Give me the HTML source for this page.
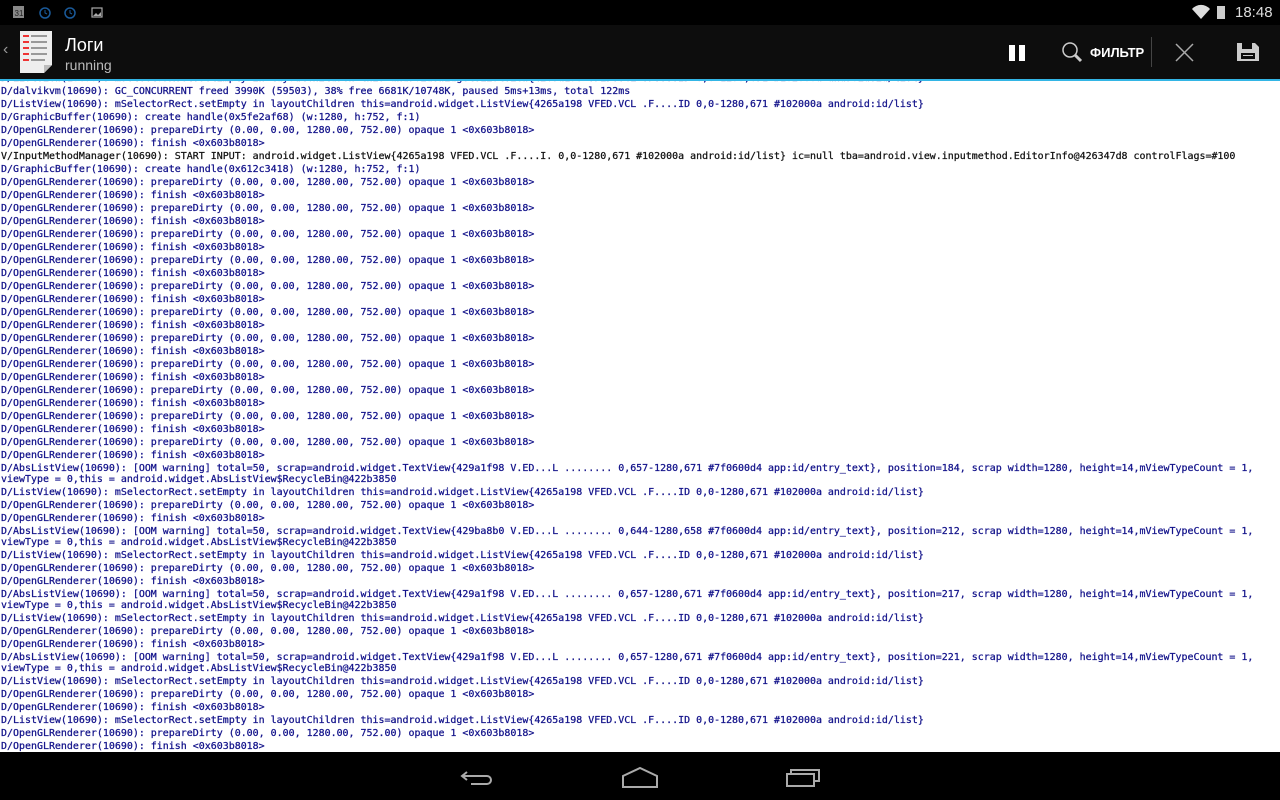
<!DOCTYPE html>
<html><head><meta charset="utf-8"><style>
*{margin:0;padding:0;box-sizing:border-box}
body{width:1280px;height:800px;overflow:hidden;background:#000;position:relative;font-family:"Liberation Sans","Noto Sans CJK SC",sans-serif}
#sb{position:absolute;left:0;top:0;width:1280px;height:25px;background:#000}
#ab{position:absolute;left:0;top:25px;width:1280px;height:54px;background:#0d0d0d}
#line{position:absolute;left:0;top:79px;width:1280px;height:2px;background:#33b5e5}
#log{position:absolute;left:0;top:81px;width:1280px;height:671px;background:#fff;overflow:hidden}
#inner{position:absolute;left:1px;top:-9px;font-family:"DejaVu Sans Mono",monospace;font-size:9.96px;line-height:11px;color:#12128a;-webkit-text-stroke:0.25px #12128a}
#inner div{padding:1px 0;white-space:nowrap;height:13px}
#inner div.w{height:24px}
#inner .v{color:#111;-webkit-text-stroke:0.25px #111}
#nb{position:absolute;left:0;top:752px;width:1280px;height:48px;background:#000}
.t{position:absolute;color:#fff}
</style></head><body>
<div id="sb">
<svg width="110" height="25" style="position:absolute;left:0;top:0">
<rect x="13" y="6" width="11" height="12" fill="#888"/><text x="14.5" y="16" font-size="8" fill="#222" font-family="Liberation Sans">31</text>
<circle cx="45" cy="13" r="5" fill="none" stroke="#1a5a9a" stroke-width="1.5"/><path d="M45 10v3l2 1" stroke="#1a5a9a" fill="none"/>
<circle cx="70" cy="13" r="5" fill="none" stroke="#1a5a9a" stroke-width="1.5"/><path d="M70 10v3l2 1" stroke="#1a5a9a" fill="none"/>
<rect x="92" y="8" width="10" height="9" fill="none" stroke="#aaa" stroke-width="1.2"/><path d="M93 16l3-3 2 2 3-3v4z" fill="#aaa"/>
</svg>
<svg width="40" height="25" style="position:absolute;left:1190px;top:0"><path d="M2 9a12 12 0 0 1 18 0l-9 10z" fill="#ddd"/><rect x="27" y="6" width="8" height="13" fill="#ccc"/></svg>
<div class="t" style="left:1235px;top:4px;font-size:15px;color:#ddd">18:48</div>
</div>
<div id="ab">
<div class="t" style="left:3px;top:16px;font-size:16px;color:#999">‹</div>
<svg width="38" height="46" style="position:absolute;left:18px;top:4px"><path d="M2 2h32v34l-8 8H2z" fill="#eee"/><path d="M26 44l8-8h-8z" fill="#bbb"/>
<g fill="#e33"><rect x="5" y="6" width="6" height="2"/><rect x="5" y="12" width="6" height="2"/><rect x="5" y="18" width="6" height="2"/><rect x="5" y="24" width="6" height="2"/><rect x="5" y="30" width="6" height="2"/></g>
<g fill="#999"><rect x="13" y="6" width="16" height="2"/><rect x="13" y="12" width="16" height="2"/><rect x="13" y="18" width="16" height="2"/><rect x="13" y="24" width="16" height="2"/><rect x="13" y="30" width="14" height="2"/></g></svg>
<div class="t" style="left:65px;top:10px;font-size:18px">Логи</div>
<div class="t" style="left:65px;top:32px;font-size:14px;color:#bbb">running</div>
<svg width="280" height="54" style="position:absolute;left:1000px;top:0">
<rect x="9" y="20" width="6" height="16" fill="#fff"/><rect x="19" y="20" width="6" height="16" fill="#fff"/>
<circle cx="70" cy="25" r="7" fill="none" stroke="#ccc" stroke-width="1.5"/><path d="M75 30l6 6" stroke="#ccc" stroke-width="3"/>
<rect x="151" y="12" width="1" height="30" fill="#444"/>
<path d="M176 19l17 17M193 19l-17 17" stroke="#aaa" stroke-width="1.5"/>
<path d="M237 18h18l4 4v14h-22z" fill="#ccc"/><rect x="242" y="18" width="10" height="6" fill="#0d0d0d"/><rect x="241" y="28" width="14" height="6" fill="#0d0d0d"/><rect x="243" y="30" width="10" height="1" fill="#ccc"/>
</svg>
<div class="t" style="left:1090px;top:20px;font-size:13px;font-weight:bold">ФИЛЬТР</div>
</div>
<div id="line"></div>
<div id="log"><div id="inner"><div>D/ListView(10690): mSelectorRect.setEmpty in layoutChildren this=android.widget.ListView{4265a198 VFED.VCL .F....ID 0,0-1280,671 #102000a android:id/list}</div><div>D/dalvikvm(10690): GC_CONCURRENT freed 3990K (59503), 38% free 6681K/10748K, paused 5ms+13ms, total 122ms</div><div>D/ListView(10690): mSelectorRect.setEmpty in layoutChildren this=android.widget.ListView{4265a198 VFED.VCL .F....ID 0,0-1280,671 #102000a android:id/list}</div><div>D/GraphicBuffer(10690): create handle(0x5fe2af68) (w:1280, h:752, f:1)</div><div>D/OpenGLRenderer(10690): prepareDirty (0.00, 0.00, 1280.00, 752.00) opaque 1 &lt;0x603b8018&gt;</div><div>D/OpenGLRenderer(10690): finish &lt;0x603b8018&gt;</div><div class="v">V/InputMethodManager(10690): START INPUT: android.widget.ListView{4265a198 VFED.VCL .F....I. 0,0-1280,671 #102000a android:id/list} ic=null tba=android.view.inputmethod.EditorInfo@426347d8 controlFlags=#100</div><div>D/GraphicBuffer(10690): create handle(0x612c3418) (w:1280, h:752, f:1)</div><div>D/OpenGLRenderer(10690): prepareDirty (0.00, 0.00, 1280.00, 752.00) opaque 1 &lt;0x603b8018&gt;</div><div>D/OpenGLRenderer(10690): finish &lt;0x603b8018&gt;</div><div>D/OpenGLRenderer(10690): prepareDirty (0.00, 0.00, 1280.00, 752.00) opaque 1 &lt;0x603b8018&gt;</div><div>D/OpenGLRenderer(10690): finish &lt;0x603b8018&gt;</div><div>D/OpenGLRenderer(10690): prepareDirty (0.00, 0.00, 1280.00, 752.00) opaque 1 &lt;0x603b8018&gt;</div><div>D/OpenGLRenderer(10690): finish &lt;0x603b8018&gt;</div><div>D/OpenGLRenderer(10690): prepareDirty (0.00, 0.00, 1280.00, 752.00) opaque 1 &lt;0x603b8018&gt;</div><div>D/OpenGLRenderer(10690): finish &lt;0x603b8018&gt;</div><div>D/OpenGLRenderer(10690): prepareDirty (0.00, 0.00, 1280.00, 752.00) opaque 1 &lt;0x603b8018&gt;</div><div>D/OpenGLRenderer(10690): finish &lt;0x603b8018&gt;</div><div>D/OpenGLRenderer(10690): prepareDirty (0.00, 0.00, 1280.00, 752.00) opaque 1 &lt;0x603b8018&gt;</div><div>D/OpenGLRenderer(10690): finish &lt;0x603b8018&gt;</div><div>D/OpenGLRenderer(10690): prepareDirty (0.00, 0.00, 1280.00, 752.00) opaque 1 &lt;0x603b8018&gt;</div><div>D/OpenGLRenderer(10690): finish &lt;0x603b8018&gt;</div><div>D/OpenGLRenderer(10690): prepareDirty (0.00, 0.00, 1280.00, 752.00) opaque 1 &lt;0x603b8018&gt;</div><div>D/OpenGLRenderer(10690): finish &lt;0x603b8018&gt;</div><div>D/OpenGLRenderer(10690): prepareDirty (0.00, 0.00, 1280.00, 752.00) opaque 1 &lt;0x603b8018&gt;</div><div>D/OpenGLRenderer(10690): finish &lt;0x603b8018&gt;</div><div>D/OpenGLRenderer(10690): prepareDirty (0.00, 0.00, 1280.00, 752.00) opaque 1 &lt;0x603b8018&gt;</div><div>D/OpenGLRenderer(10690): finish &lt;0x603b8018&gt;</div><div>D/OpenGLRenderer(10690): prepareDirty (0.00, 0.00, 1280.00, 752.00) opaque 1 &lt;0x603b8018&gt;</div><div>D/OpenGLRenderer(10690): finish &lt;0x603b8018&gt;</div><div class="w">D/AbsListView(10690): [OOM warning] total=50, scrap=android.widget.TextView{429a1f98 V.ED...L ........ 0,657-1280,671 #7f0600d4 app:id/entry_text}, position=184, scrap width=1280, height=14,mViewTypeCount = 1,<br>viewType = 0,this = android.widget.AbsListView$RecycleBin@422b3850</div><div>D/ListView(10690): mSelectorRect.setEmpty in layoutChildren this=android.widget.ListView{4265a198 VFED.VCL .F....ID 0,0-1280,671 #102000a android:id/list}</div><div>D/OpenGLRenderer(10690): prepareDirty (0.00, 0.00, 1280.00, 752.00) opaque 1 &lt;0x603b8018&gt;</div><div>D/OpenGLRenderer(10690): finish &lt;0x603b8018&gt;</div><div class="w">D/AbsListView(10690): [OOM warning] total=50, scrap=android.widget.TextView{429ba8b0 V.ED...L ........ 0,644-1280,658 #7f0600d4 app:id/entry_text}, position=212, scrap width=1280, height=14,mViewTypeCount = 1,<br>viewType = 0,this = android.widget.AbsListView$RecycleBin@422b3850</div><div>D/ListView(10690): mSelectorRect.setEmpty in layoutChildren this=android.widget.ListView{4265a198 VFED.VCL .F....ID 0,0-1280,671 #102000a android:id/list}</div><div>D/OpenGLRenderer(10690): prepareDirty (0.00, 0.00, 1280.00, 752.00) opaque 1 &lt;0x603b8018&gt;</div><div>D/OpenGLRenderer(10690): finish &lt;0x603b8018&gt;</div><div class="w">D/AbsListView(10690): [OOM warning] total=50, scrap=android.widget.TextView{429a1f98 V.ED...L ........ 0,657-1280,671 #7f0600d4 app:id/entry_text}, position=217, scrap width=1280, height=14,mViewTypeCount = 1,<br>viewType = 0,this = android.widget.AbsListView$RecycleBin@422b3850</div><div>D/ListView(10690): mSelectorRect.setEmpty in layoutChildren this=android.widget.ListView{4265a198 VFED.VCL .F....ID 0,0-1280,671 #102000a android:id/list}</div><div>D/OpenGLRenderer(10690): prepareDirty (0.00, 0.00, 1280.00, 752.00) opaque 1 &lt;0x603b8018&gt;</div><div>D/OpenGLRenderer(10690): finish &lt;0x603b8018&gt;</div><div class="w">D/AbsListView(10690): [OOM warning] total=50, scrap=android.widget.TextView{429a1f98 V.ED...L ........ 0,657-1280,671 #7f0600d4 app:id/entry_text}, position=221, scrap width=1280, height=14,mViewTypeCount = 1,<br>viewType = 0,this = android.widget.AbsListView$RecycleBin@422b3850</div><div>D/ListView(10690): mSelectorRect.setEmpty in layoutChildren this=android.widget.ListView{4265a198 VFED.VCL .F....ID 0,0-1280,671 #102000a android:id/list}</div><div>D/OpenGLRenderer(10690): prepareDirty (0.00, 0.00, 1280.00, 752.00) opaque 1 &lt;0x603b8018&gt;</div><div>D/OpenGLRenderer(10690): finish &lt;0x603b8018&gt;</div><div>D/ListView(10690): mSelectorRect.setEmpty in layoutChildren this=android.widget.ListView{4265a198 VFED.VCL .F....ID 0,0-1280,671 #102000a android:id/list}</div><div>D/OpenGLRenderer(10690): prepareDirty (0.00, 0.00, 1280.00, 752.00) opaque 1 &lt;0x603b8018&gt;</div><div>D/OpenGLRenderer(10690): finish &lt;0x603b8018&gt;</div></div></div>
<div id="nb">
<svg width="1280" height="48" style="position:absolute;left:0;top:0">
<g fill="none" stroke="#aaa" stroke-width="2">
<path d="M467 20l-5 4 5 4M462 24h25a4 4 0 0 1 0 8h-16"/>
<path d="M623 35v-11l17-8 17 8v11z"/>
<path d="M787 22h27v12h-27zM791 22v-4h28v11h-5"/>
</g></svg>
</div>
</body></html>
